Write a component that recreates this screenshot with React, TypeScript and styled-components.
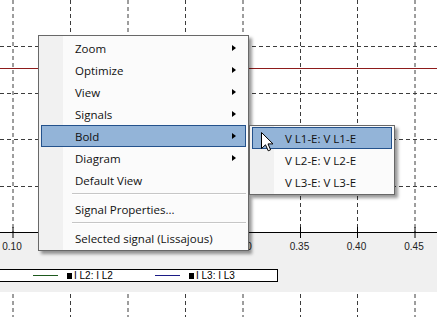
import React from 'react';
import styled, { createGlobalStyle } from 'styled-components';

const GlobalStyle = createGlobalStyle`
  html, body {
    margin: 0;
    padding: 0;
    background: #ffffff;
    overflow: hidden;
  }
`;

const GRID_X = [13, 70.5, 128, 185.5, 243, 300.5, 357.5, 415];
const GRID_Y = [46, 93, 139, 186];
const AXIS_Y = 232;
// labels hidden behind the context menu are not drawn
const SHOWN_LABELS = [0, 4, 5, 6, 7];

const Screen = styled.div`
  position: relative;
  width: 437px;
  height: 317px;
  overflow: hidden;
  display: flex;
  flex-direction: column;
  font-family: 'Liberation Sans', Arial, sans-serif;
`;

const ChartSvg = styled.svg`
  display: block;
  flex: none;
`;

const LegendStrip = styled.div`
  height: 34px;
  background: #f0f0f0;
  padding-top: 11px;
  box-sizing: border-box;
`;

const LegendBox = styled.div`
  width: 279px;
  height: 13px;
  margin-left: -1px;
  box-sizing: border-box;
  border: 1px solid #000;
  background: #fff;
  display: flex;
  align-items: center;
  padding-left: 33px;
`;

const LegendItem = styled.div`
  width: 124px;
  display: flex;
  align-items: center;
`;

const LegendLine = styled.span<{ $color: string }>`
  width: 25px;
  height: 1px;
  background: ${p => p.$color};
  margin-right: 9px;
`;

const LegendSquare = styled.span`
  width: 5px;
  height: 6px;
  background: #000;
  margin-right: 2px;
`;

const LegendText = styled.span`
  font-size: 10px;
  line-height: 10px;
  color: #000;
`;

const MenuPanel = styled.div<{ $left: number; $top: number; $width: number }>`
  position: absolute;
  left: ${p => p.$left}px;
  top: ${p => p.$top}px;
  width: ${p => p.$width}px;
  box-sizing: border-box;
  border: 1px solid #686868;
  padding: 1px 2px;
  background: linear-gradient(to right, #f1f1f1 0, #f1f1f1 24px, #fbfbfb 24px);
  box-shadow: 3px 3px 3px rgba(0, 0, 0, 0.4);
  font-family: 'Open Sans', 'Noto Sans', sans-serif;
  font-size: 11.5px;
  color: #111;
`;

const MenuItem = styled.div<{ $active?: boolean; $indent: number }>`
  position: relative;
  height: 22px;
  box-sizing: border-box;
  display: flex;
  align-items: center;
  padding-left: ${p => p.$indent}px;
  border: 1px solid ${p => (p.$active ? '#24528c' : 'transparent')};
  background: ${p => (p.$active ? '#93b4d8' : 'transparent')};
  white-space: nowrap;
`;

const SubArrow = styled.span`
  position: absolute;
  right: 9px;
  top: 7px;
  width: 0;
  height: 0;
  border-top: 3.5px solid transparent;
  border-bottom: 3.5px solid transparent;
  border-left: 4px solid #000;
`;

const Separator = styled.div`
  height: 1px;
  margin: 2px 0 3px 31px;
  background: #c6c6c6;
  border-bottom: 1px solid #fff;
`;

const Cursor = styled.svg`
  position: absolute;
  left: 261px;
  top: 132px;
`;

const PlotChart = () => (
  <ChartSvg width={437} height={258}>
    <rect x={0} y={0} width={437} height={AXIS_Y} fill="#ffffff" />
    <rect x={0} y={AXIS_Y} width={437} height={258 - AXIS_Y} fill="#f0f0f0" />
    {GRID_X.map(x => (
      <line key={`v${x}`} x1={x} y1={0} x2={x} y2={AXIS_Y} stroke="#3c3c3c" strokeDasharray="4 3" />
    ))}
    {GRID_Y.map(y => (
      <line key={`h${y}`} x1={0} y1={y + 0.5} x2={437} y2={y + 0.5} stroke="#3c3c3c" strokeDasharray="4 3" />
    ))}
    <line x1={0} y1={68.5} x2={437} y2={68.5} stroke="#8e1b1b" />
    <line x1={0} y1={AXIS_Y + 0.5} x2={437} y2={AXIS_Y + 0.5} stroke="#000" />
    {GRID_X.map((x, i) => (
      <g key={`t${x}`}>
        <line x1={x} y1={227} x2={x} y2={238} stroke="#000" />
        {SHOWN_LABELS.includes(i) && (
          <text x={x - 1} y={250} fontSize={10} fontFamily="'Liberation Sans', Arial, sans-serif" fill="#222" textAnchor="middle">
            {(0.1 + i * 0.05).toFixed(2)}
          </text>
        )}
      </g>
    ))}
  </ChartSvg>
);

const LowerPlot = () => (
  <ChartSvg width={437} height={25}>
    {GRID_X.map(x => (
      <line key={`l${x}`} x1={x} y1={2} x2={x} y2={25} stroke="#3c3c3c" strokeDasharray="4 3" />
    ))}
  </ChartSvg>
);

const mainItems = [
  { label: 'Zoom', sub: true },
  { label: 'Optimize', sub: true },
  { label: 'View', sub: true },
  { label: 'Signals', sub: true },
  { label: 'Bold', sub: true, active: true },
  { label: 'Diagram', sub: true },
  { label: 'Default View' },
  { label: '-' },
  { label: 'Signal Properties...' },
  { label: '-' },
  { label: 'Selected signal (Lissajous)' },
];

const subItems = ['V L1-E: V L1-E', 'V L2-E: V L2-E', 'V L3-E: V L3-E'];

export default function App() {
  return (
    <>
      <GlobalStyle />
      <Screen>
        <PlotChart />
        <LegendStrip>
          <LegendBox>
            <LegendItem>
              <LegendLine $color="#1e5a1e" />
              <LegendSquare />
              <LegendText>I L2: I L2</LegendText>
            </LegendItem>
            <LegendItem>
              <LegendLine $color="#1c1c86" />
              <LegendSquare />
              <LegendText>I L3: I L3</LegendText>
            </LegendItem>
          </LegendBox>
        </LegendStrip>
        <LowerPlot />

        <MenuPanel $left={38} $top={35} $width={211}>
          {mainItems.map((it, i) =>
            it.label === '-' ? (
              <Separator key={i} />
            ) : (
              <MenuItem key={i} $active={it.active} $indent={33}>
                {it.label}
                {it.sub && <SubArrow />}
              </MenuItem>
            )
          )}
        </MenuPanel>

        <MenuPanel $left={249} $top={125} $width={146}>
          {subItems.map((s, i) => (
            <MenuItem key={s} $active={i === 0} $indent={32}>
              {s}
            </MenuItem>
          ))}
        </MenuPanel>

        <Cursor width={13} height={20} viewBox="0 0 13 20">
          <path d="M0.5 0.5 L0.5 16.5 L4.5 12.8 L7.2 18.8 L9.6 17.8 L7 11.9 L12 11.9 Z" fill="#fff" stroke="#000" strokeWidth={1} strokeLinejoin="miter" />
        </Cursor>
      </Screen>
    </>
  );
}
